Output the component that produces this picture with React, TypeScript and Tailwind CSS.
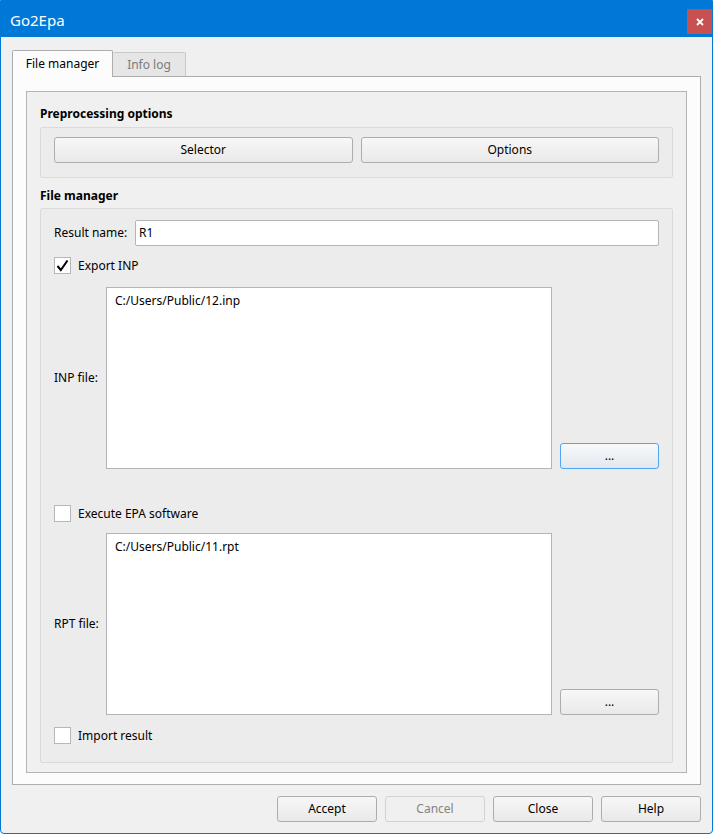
const font = { fontFamily: '"Noto Sans", "Open Sans", sans-serif' };

function Btn({
  label,
  disabled,
  focused,
  className = "",
}: {
  label: string;
  disabled?: boolean;
  focused?: boolean;
  className?: string;
}) {
  let look =
    "border-[#adadad] bg-gradient-to-b from-[#f7f7f7] to-[#e9e9e9] text-black";
  if (disabled) look = "border-[#d3d3d3] bg-[#f0f0f0] text-[#838383]";
  if (focused)
    look =
      "border-[#4ea6f5] bg-gradient-to-b from-[#f7f9fb] to-[#e2e8ee] text-black";
  return (
    <button
      className={`flex h-[26px] items-center justify-center rounded-[3px] border text-[12px] ${look} ${className}`}
    >
      {label}
    </button>
  );
}

function Check({ label, checked }: { label: string; checked?: boolean }) {
  return (
    <div className="flex h-[17px] items-center gap-[7px]">
      <div className="flex h-[17px] w-[17px] items-center justify-center border border-[#b7b7b7] bg-white">
        {checked && (
          <svg width="13" height="13" viewBox="0 0 13 13">
            <path
              d="M1.5 7 L4.8 11 L11.5 1.5"
              fill="none"
              stroke="#000"
              strokeWidth="2"
            />
          </svg>
        )}
      </div>
      <span className="text-[12px] text-black">{label}</span>
    </div>
  );
}

function FileRow({ label, path, focused }: { label: string; path: string; focused?: boolean }) {
  return (
    <div className="flex h-[182px] items-stretch">
      <div className="flex w-[52px] items-center text-[12px] text-black">{label}</div>
      <div className="w-[446px] border border-[#b4b4b4] bg-white px-[8px] pt-[4px] text-[12px] text-black">
        {path}
      </div>
      <div className="ml-[8px] flex flex-1 items-end">
        <Btn label="..." focused={focused} className="w-full" />
      </div>
    </div>
  );
}

export default function App() {
  return (
    <div
      style={font}
      className="flex h-[834px] w-[713px] flex-col overflow-hidden rounded-b-[4px] border border-[#0078d7] bg-[#f0f0f0]"
    >
      {/* Title bar */}
      <div className="flex h-[36px] shrink-0 items-start justify-between bg-[#0078d7]">
        <span className="ml-[9px] mt-[8px] text-[15px] text-white">Go2Epa</span>
        <div className="mt-[8px] flex h-[25px] w-[25px] items-center justify-center bg-[#c75050]">
          <svg width="8" height="8" viewBox="0 0 8 8">
            <path d="M1 1 L7 7 M7 1 L1 7" stroke="#fff" strokeWidth="1.8" />
          </svg>
        </div>
      </div>

      <div className="flex flex-1 flex-col pl-[11px] pr-[11px] pt-[13px]">
        {/* Tabs */}
        <div className="relative z-10 flex h-[27px] items-end">
          <div className="flex h-[27px] w-[101px] items-center justify-center rounded-t-[2px] border border-b-0 border-[#adadad] bg-[#fcfcfc] text-[12px] text-black">
            File manager
          </div>
          <div className="mb-[1px] flex h-[24px] w-[73px] items-center justify-center rounded-t-[2px] border border-b-0 border-l-0 border-[#c9c9c9] bg-[#e6e6e6] text-[12px] text-[#7c7c7c]">
            Info log
          </div>
        </div>

        {/* Tab pane */}
        <div className="mt-[-1px] h-[709px] border border-[#adadad] bg-[#fcfcfc] px-[13px] pb-[11px] pt-[14px]">
          <div className="flex h-full flex-col border border-[#b4b4b4] bg-[#f0f0f0] px-[13px] pt-[13px]">
            <div className="text-[12px] font-bold text-black">Preprocessing options</div>
            <div className="mt-[4px] flex h-[51px] gap-[8px] rounded-[2px] border border-[#dadada] bg-[#ececec] px-[13px] pt-[9px]">
              <Btn label="Selector" className="flex-1" />
              <Btn label="Options" className="flex-1" />
            </div>

            <div className="mt-[9px] text-[12px] font-bold text-black">File manager</div>
            <div className="mt-[3px] flex h-[555px] flex-col rounded-[2px] border border-[#dadada] bg-[#ececec] px-[13px] pt-[11px]">
              <div className="flex h-[26px] items-center">
                <span className="w-[81px] text-[12px] text-black">Result name:</span>
                <div className="flex h-[26px] flex-1 items-center rounded-[2px] border border-[#b4b4b4] bg-white px-[3px] text-[12px] text-black">
                  R1
                </div>
              </div>
              <div className="mt-[11px]">
                <Check label="Export INP" checked />
              </div>
              <div className="mt-[13px]">
                <FileRow label="INP file:" path="C:/Users/Public/12.inp" focused />
              </div>
              <div className="mt-[36px]">
                <Check label="Execute EPA software" />
              </div>
              <div className="mt-[11px]">
                <FileRow label="RPT file:" path="C:/Users/Public/11.rpt" />
              </div>
              <div className="mt-[12px]">
                <Check label="Import result" />
              </div>
            </div>
          </div>
        </div>

        {/* Footer */}
        <div className="mt-[11px] flex justify-end gap-[8px]">
          <Btn label="Accept" className="w-[100px]" />
          <Btn label="Cancel" disabled className="w-[100px]" />
          <Btn label="Close" className="w-[100px]" />
          <Btn label="Help" className="w-[100px]" />
        </div>
      </div>
    </div>
  );
}
